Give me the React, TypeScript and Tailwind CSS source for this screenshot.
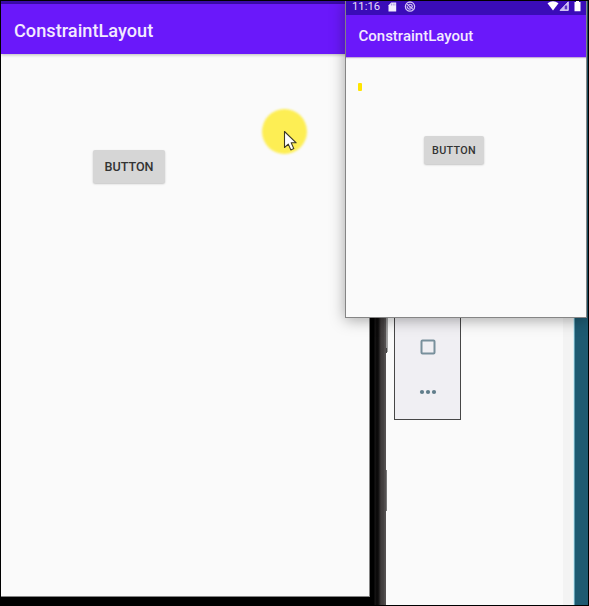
import React from "react";

function StatusBar() {
  return (
    <div className="flex h-[14px] shrink-0 items-start bg-[#3a0cb8] pl-[6px] text-[#e6defa]">
      <span className="w-[36px] whitespace-nowrap text-[11.3px] leading-[11px]">11:16</span>
      <svg className="mt-px h-[10px] w-[9px]" viewBox="0 0 9 10">
        <path d="M3.2 .5H8.2V9.6H.5V3.2Z" fill="#f2edff" />
        <path d="M3.4 1.5v2M5.2 1.5v2M6.9 1.5v2" stroke="#8b70d6" strokeWidth=".7" />
      </svg>
      <svg className="ml-[7px] h-[12px] w-[12px]" viewBox="0 0 12 12" fill="none" stroke="#d3c5f5">
        <circle cx="6" cy="5.6" r="4.6" strokeWidth="1.3" />
        <path d="M3 3.1 9 8.4M4.7 3.5c3-1 4.5 1.5 3 3M3.2 5.2c0 2.5 2 3.4 3.8 2.6M5 5.8h2" strokeWidth="1.2" />
      </svg>
      <div className="grow" />
      <svg className="h-[10px] w-[12px]" viewBox="0 0 12 10">
        <path d="M.5 2.2Q6-1.6 11.5 2.2L6 9.4Z" fill="#fff" />
      </svg>
      <svg className="h-[10px] w-[10px]" viewBox="0 0 10 10">
        <path d="M1 9.4 9.3.8v8.6Z" fill="#c9b9f0" />
        <path d="M5.7 4.5h2.5v3.8H5.7Z" fill="#5931c5" />
        <path d="M1 9.4 9.3.8v8.6Z" fill="none" stroke="#eee7ff" strokeWidth=".8" />
      </svg>
      <svg className="mr-[5px] ml-[5px] h-[11px] w-[7px]" viewBox="0 0 7 11">
        <path d="M2 0h3v1h1.5v9.3h-6V1H2Z" fill="#fff" />
      </svg>
    </div>
  );
}

function MainScreen() {
  return (
    <section className="flex h-[596px] w-[369px] shrink-0 flex-col border-r border-b border-[#858585] bg-[#fafafa]">
      <div className="h-[3px] shrink-0 bg-[#3b0bab]" />
      <header className="flex h-[50px] shrink-0 items-center bg-[#6a18fa] pb-px pl-[13px] shadow-[0_1px_3px_rgba(0,0,0,0.25)]">
        <h1 className="pt-[5px] text-[18.2px] leading-6 font-medium whitespace-nowrap text-[#f3eaff]">ConstraintLayout</h1>
      </header>
      <main className="pt-[96px] pl-[92px]">
        <button className="flex h-[33px] w-[72px] items-center justify-center rounded-[2px] bg-[#d6d6d6] pt-px text-[12.6px] font-medium text-[#333] shadow-[0_1px_2px_rgba(0,0,0,0.22)]">
          BUTTON
        </button>
      </main>
    </section>
  );
}

function PhoneWindow() {
  return (
    <section className="absolute top-px left-[345px] flex h-[317px] w-[242px] flex-col border-r border-b border-l border-[#858585] bg-[#fafafa] shadow-[0_2px_14px_rgba(0,0,0,0.34)]">
      <StatusBar />
      <header className="flex h-[42px] shrink-0 items-center bg-[#6a18fa] pb-px pl-[12.5px] shadow-[0_1px_1px_rgba(95,35,150,0.35)]">
        <h2 className="text-[15px] leading-5 font-medium whitespace-nowrap text-[#f3eaff]">ConstraintLayout</h2>
      </header>
      <main className="flex flex-col">
        <div className="mt-[26px] ml-[12px] h-[8px] w-[4px] rounded-[1px] bg-[#ffe500]" />
        <button className="mt-[45px] ml-[78px] flex h-[28px] w-[60px] items-center justify-center rounded-[2px] bg-[#d6d6d6] pt-[2px] text-[10.8px] font-medium tracking-[0.3px] text-[#333] shadow-[0_1px_2px_rgba(0,0,0,0.22)]">
          BUTTON
        </button>
      </main>
    </section>
  );
}

function EmulatorToolbar() {
  return (
    <aside className="mt-[300px] ml-[6px] flex h-[119px] w-[67px] flex-col items-center border border-[#464646] bg-[#f0eff3] pt-[37px]">
      <svg className="h-[16px] w-[16px] shrink-0" viewBox="0 0 16 16">
        <rect x="1.5" y="1.5" width="13" height="13" rx="1" fill="none" stroke="#78909c" strokeWidth="2" />
      </svg>
      <svg className="mt-[34px] h-[6px] w-[18px] shrink-0" viewBox="0 0 18 6" fill="#607d8b">
        <circle cx="3" cy="3" r="2.1" />
        <circle cx="9" cy="3" r="2.1" />
        <circle cx="15" cy="3" r="2.1" />
      </svg>
    </aside>
  );
}

function DeviceEdge() {
  return (
    <div className="flex h-full w-[16px] shrink-0">
      <div className="w-[4px] bg-black" />
      <div className="w-[12px] bg-[linear-gradient(to_right,#000_0px,#181616_1px,#080707_3px,#171515_5px,#332f2f_6px,#454141_8px,#403d3d_9px,#555151_11px,#555151_12px)]" />
    </div>
  );
}

function SideButtons() {
  return (
    <div className="flex w-px shrink-0 flex-col">
      <div className="h-[347px] bg-[#999]" />
      <div className="h-[5px] bg-[#444]" />
      <div className="mt-[117px] h-[41px] bg-[#777]" />
    </div>
  );
}

export default function App() {
  return (
    <div className="relative h-[606px] w-[589px] overflow-hidden bg-black pt-px pl-px font-['Roboto',sans-serif]">
      <div className="flex h-[604px] w-[587px] overflow-hidden">
        <MainScreen />
        <DeviceEdge />
        <div className="flex min-w-0 grow bg-[#fafafa]">
          <SideButtons />
          <div className="h-[351px] w-px shrink-0 bg-[#a4a4a4]" />
          <div className="w-[175px] shrink-0">
            <EmulatorToolbar />
          </div>
          <div className="w-[10px] shrink-0 bg-[#f3f3f3]" />
          <div className="w-px shrink-0 bg-[#d4edf5]" />
          <div className="w-px shrink-0 bg-[#63a0b2]" />
          <div className="grow bg-[#1e5a71]" />
        </div>
      </div>
      <PhoneWindow />
      <div className="absolute top-[109px] left-[262px] h-[45px] w-[45px] rounded-full bg-[#fdee54] blur-[1px]" />
      <svg className="absolute top-[130px] left-[283px] h-[22px] w-[16px]" viewBox="0 0 16 22">
        <path d="M1.5 1.5v16l3.8-3.4 2.5 5.8 3-1.3-2.6-5.8h5Z" fill="#fff" stroke="#3d3924" strokeWidth="1.1" strokeLinejoin="round" />
      </svg>
    </div>
  );
}
